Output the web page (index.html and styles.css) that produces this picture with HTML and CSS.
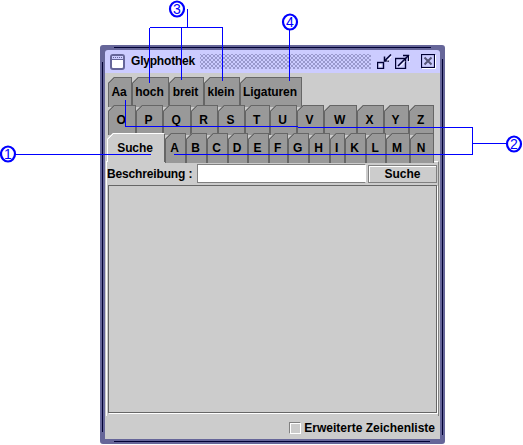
FILE: index.html
```html
<!DOCTYPE html>
<html lang="en">
<head>
    <meta charset="UTF-8">
    <meta name="viewport" content="width=device-width, initial-scale=1.0">
    <title>Glyphothek</title>
    <link rel="stylesheet" href="styles.css">
</head>
<body>
    <div class="window">
        <div class="edge edge-top"></div>
        <div class="edge edge-left"></div>
        <div class="edge edge-right"></div>
        <div class="edge edge-bottom"></div>

        <div class="titlebar">
            <svg class="win-icon" width="15" height="16" viewBox="0 0 15 16">
                <rect x="1" y="1" width="13" height="14" rx="2" fill="#fff" stroke="#666699" stroke-width="2"/>
                <rect x="2" y="2" width="11" height="3" fill="#ccccff"/>
                <path d="M3 3.5h1M5 3.5h1M7 3.5h1M9 3.5h1M11 3.5h1" stroke="#666699"/>
                <path d="M2 5.5h11" stroke="#666699"/>
            </svg>
            <div class="win-title">Glyphothek</div>
            <div class="dots"></div>
            <div class="win-buttons">
                <svg width="15" height="15" viewBox="0 0 15 15">
                    <rect x="0.5" y="8.5" width="6" height="6" fill="#ccccff" stroke="#000033" stroke-width="1.4"/>
                    <rect x="2.5" y="10.5" width="2" height="2" fill="#fff"/>
                    <path d="M14 0.5L8 6.5" stroke="#000033" stroke-width="1.5"/>
                    <path d="M7.5 2.5V7H12" fill="none" stroke="#000033" stroke-width="1.5"/>
                    <path d="M14.5 2.5L10 7.5" stroke="#fff"/>
                </svg>
                <svg width="15" height="15" viewBox="0 0 15 15">
                    <rect x="0.5" y="4.5" width="10" height="10" fill="#ccccff" stroke="#000033" stroke-width="1.4"/>
                    <path d="M3 12L13 2" stroke="#000033" stroke-width="1.6"/>
                    <path d="M8 1.5H13.5V7" fill="none" stroke="#000033" stroke-width="1.4"/>
                    <path d="M5 12.5L10 7.5M14.8 2V8" fill="none" stroke="#fff"/>
                </svg>
                <svg class="btn-close" width="15" height="15" viewBox="0 0 15 15">
                    <rect x="0.5" y="0.5" width="13" height="13" fill="#ccccff" stroke="#000033" stroke-width="1.2"/>
                    <path d="M14.5 1V14.5H1" fill="none" stroke="#fff"/>
                    <path d="M3.5 3.5L10.5 10.5M10.5 3.5L3.5 10.5" stroke="#555577" stroke-width="2"/>
                </svg>
            </div>
        </div>

        <div class="content">
            <div class="tab-row row-one">
                <div class="tab">Aa</div>
                <div class="tab">hoch</div>
                <div class="tab">breit</div>
                <div class="tab">klein</div>
                <div class="tab">Ligaturen</div>
            </div>
            <div class="tab-row row-two">
                <div class="tab">O</div>
                <div class="tab">P</div>
                <div class="tab">Q</div>
                <div class="tab">R</div>
                <div class="tab">S</div>
                <div class="tab">T</div>
                <div class="tab">U</div>
                <div class="tab">V</div>
                <div class="tab">W</div>
                <div class="tab">X</div>
                <div class="tab">Y</div>
                <div class="tab">Z</div>
            </div>
            <div class="tab-row row-three">
                <div class="tab active">Suche</div>
                <div class="tab">A</div>
                <div class="tab">B</div>
                <div class="tab">C</div>
                <div class="tab">D</div>
                <div class="tab">E</div>
                <div class="tab">F</div>
                <div class="tab">G</div>
                <div class="tab">H</div>
                <div class="tab">I</div>
                <div class="tab">K</div>
                <div class="tab">L</div>
                <div class="tab">M</div>
                <div class="tab">N</div>
            </div>

            <div class="panel">
                <div class="search">
                    <label class="search-label">Beschreibung :</label>
                    <input class="search-input" type="text">
                    <button class="search-btn">Suche</button>
                </div>
                <div class="list"></div>
            </div>

            <div class="status">
                <span class="check"></span>
                <span class="check-label">Erweiterte Zeichenliste</span>
            </div>
        </div>
    </div>

    <svg class="notes" width="523" height="445" viewBox="0 0 523 445">
        <g class="note-lines">
            <path d="M187.5 9V27.5M149.5 27.5H222.5M149.5 27.5V83M181.5 27.5V80M222.5 27.5V81"/>
            <path d="M289.5 30V81"/>
            <path d="M125.5 100V126.5H298M298 127.5H472.5V154.5H174"/>
            <path d="M472 143.5H507"/>
            <path d="M15 154.5H151"/>
        </g>
        <g class="note-circles">
            <ellipse cx="177" cy="9" rx="7" ry="7.5"/>
            <ellipse cx="290" cy="22" rx="7" ry="7.5"/>
            <ellipse cx="514" cy="144" rx="7" ry="7.5"/>
            <ellipse cx="8" cy="154" rx="7" ry="7.5"/>
        </g>
        <g class="note-nums">
            <text x="177" y="14">3</text>
            <text x="290" y="27">4</text>
            <text x="514" y="149">2</text>
            <text x="8" y="159">1</text>
        </g>
    </svg>
</body>
</html>
```

FILE: styles.css
```css
* {
    margin: 0;
    padding: 0;
    box-sizing: border-box;
}
html, body {
    height: 445px;
    overflow: hidden;
    background-color: #fff;
}
body {
    position: relative;
    font-family: "Liberation Sans", Arial, sans-serif;
    font-size: 12px;
    font-weight: bold;
    color: #000;
}

.window {
    position: relative;
    width: 345px;
    height: 399px;
    margin: 45px 0 0 100px;
    border: 5px solid #666699;
    border-radius: 3px;
    background-color: #666699;
    display: flex;
    flex-direction: column;
}
.edge {
    position: absolute;
    background-color: #000033;
}
.edge-top {
    top: -3px;
    left: 9px;
    width: 317px;
    height: 1px;
}
.edge-bottom {
    bottom: -3px;
    left: 9px;
    width: 316px;
    height: 1px;
}
.edge-left {
    top: 12px;
    left: -3px;
    width: 1px;
    height: 370px;
}
.edge-right {
    top: 9px;
    right: -3px;
    width: 1px;
    height: 376px;
}

.titlebar {
    height: 23px;
    background-color: #ccccff;
    border-radius: 3px 3px 0 0;
    display: flex;
    align-items: center;
    padding-left: 5px;
}
.win-icon {
    flex: none;
}
.win-title {
    margin-left: 6px;
    width: 69px;
    line-height: 23px;
    letter-spacing: -0.2px;
}
.dots {
    flex: 1;
    height: 15px;
    background-image:
        radial-gradient(circle, #9999cc 1px, transparent 1px),
        radial-gradient(circle, #9999cc 1px, transparent 1px);
    background-size: 4px 4px;
    background-position: 0 0, 2px 2px;
}
.win-buttons {
    display: flex;
    align-items: center;
    gap: 3px;
    margin: 0 4px 0 6px;
}
.btn-close {
    margin-left: 8px;
}

.content {
    flex: 1;
    background-color: #cccccc;
    display: flex;
    flex-direction: column;
    padding-top: 4px;
}
.tab-row {
    display: grid;
    height: 28px;
    padding-left: 3px;
}
.row-one {
    grid-template-columns: 24px 37px 35px 36px 62px;
}
.row-two {
    grid-template-columns: 28px 27px 28px 27px 27px 25px 27px 27px 33px 27px 25px 25px;
}
.row-three {
    padding-left: 2px;
    grid-template-columns: 58px 21px 21px 21px 20px 21px 19px 21px 21px 15px 21px 20px 24px 24px;
}
.tab {
    border: 1px solid #666;
    border-bottom: 0;
    padding-right: 2px;
    background-color: #999;
    background-image: linear-gradient(135deg, #666 5px, #999 5px);
    background-origin: border-box;
    clip-path: polygon(0 6px, 6px 0, 100% 0, 100% 100%, 0 100%);
    text-align: center;
    line-height: 29px;
    letter-spacing: -0.1px;
}
.tab.active {
    position: relative;
    z-index: 1;
    height: 29px;
    border-color: #fff #666 #fff #fff;
    background-color: #ccc;
    background-image: linear-gradient(135deg, #fff 5px, #ccc 5px);
}

.panel {
    flex: 1;
    margin: 0 1px 0 1px;
    border-top: 1px solid #fff;
    border-left: 1px solid #fff;
    border-right: 1px solid #808080;
    padding: 2px 1px 3px 0;
    display: flex;
    flex-direction: column;
    gap: 2px;
}
.search {
    height: 19px;
    display: flex;
    align-items: center;
}
.search-label {
    width: 90px;
    padding-top: 1px;
    white-space: nowrap;
    letter-spacing: -0.15px;
}
.search-input {
    width: 169px;
    height: 19px;
    background-color: #fff;
    border: 1px solid #808080;
    border-right-color: #fff;
    border-bottom-color: #808080;
    outline: none;
}
.search-btn {
    width: 69px;
    height: 18px;
    margin-left: 2px;
    padding-top: 1px;
    font: inherit;
    background-color: #ccc;
    border: 1px solid #808080;
    box-shadow: inset 1px 1px 0 #fff;
}
.list {
    flex: 1;
    margin-left: 1px;
    border: 1px solid #666;
    box-shadow: 1px 1px 0 #fff;
    background-color: #ccc;
}

.status {
    height: 23px;
    display: flex;
    align-items: center;
    justify-content: flex-end;
    gap: 3px;
    padding-right: 5px;
}
.check {
    width: 12px;
    height: 12px;
    border: 1px solid #808080;
    box-shadow: 1px 1px 0 #fff inset;
    border-right-color: #fff;
    border-bottom-color: #fff;
}

.notes {
    position: absolute;
    top: 0;
    left: 0;
    z-index: 2;
}
.note-lines path {
    fill: none;
    stroke: #0000ff;
    stroke-width: 1;
    shape-rendering: crispEdges;
}
.note-circles ellipse {
    fill: #fff;
    stroke: #0000ff;
    stroke-width: 2.2;
}
.note-nums text {
    fill: #0000ff;
    font-family: "Liberation Sans", Arial, sans-serif;
    font-size: 14px;
    font-weight: normal;
    text-anchor: middle;
}
```
